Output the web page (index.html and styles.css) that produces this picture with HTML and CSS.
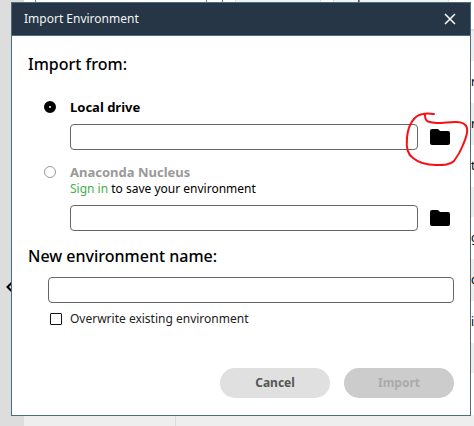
FILE: index.html
```html
<!DOCTYPE html>
<html lang="en">
<head>
<meta charset="utf-8">
<title>Import Environment</title>
<link rel="stylesheet" href="styles.css">
</head>
<body>
<div class="app" aria-hidden="true">
  <div class="app-side"><svg class="collapse" viewBox="0 0 6 10"><path d="M5.500 1 1.500 5l4 4"/></svg></div>
  <div class="app-main">
    <div class="toolbar"><span class="filter">Installed</span><span class="divider"></span><span class="chip">Channels</span><span class="chip wide">Update index...</span></div>
    <div class="columns"></div>
  </div>
  <div class="app-rows">
    <span class="head"></span><span>r</span><span class="alt">r</span><span>t</span><span class="alt short"></span><span>g</span><span class="alt">c</span><span>i</span><span class="alt short"></span><span></span><span class="alt"></span>
  </div>
</div>

<form class="dialog" role="dialog" aria-labelledby="dialog-title">
  <header class="titlebar">
    <h1 id="dialog-title">Import Environment</h1>
    <button class="close" type="button" aria-label="Close"><svg viewBox="0 0 12 12"><path d="M1 1l10 10M11 1 1 11"/></svg></button>
  </header>
  <div class="content">
    <h2>Import from:</h2>
    <div class="option">
      <input type="radio" id="local" name="source" checked>
      <label class="option-name" for="local">Local drive</label>
      <div class="picker">
        <input class="field" type="text" aria-label="Local drive path">
        <button class="folder" type="button" aria-label="Browse local drive">
          <svg class="folder-icon" viewBox="0 0 20 16"><path d="M2 0h5.500q.8 0 1.300.7L10 2h8q2 0 2 2v10q0 2-2 2H2q-2 0-2-2V2q0-2 2-2z"/></svg>
          <svg class="mark" viewBox="0 0 66 58"><path d="M30 4C27 4 24 3 19 4 10 5 4 15 3 28c-1 9 0 16 6 20 6 5 14 7 23 7 8 0 14 0 18-4 3-4 6-8 9-16 3-7 5-13 4-17-1-4-5-6-11-6-7 0-12 1-20 1-8-1-11-1-11-8"/></svg>
        </button>
      </div>
    </div>
    <div class="option">
      <input type="radio" id="nucleus" name="source">
      <label class="option-name muted" for="nucleus">Anaconda Nucleus</label>
      <p class="hint"><a href="#">Sign in</a> to save your environment</p>
      <div class="picker">
        <input class="field" type="text" aria-label="Anaconda Nucleus environment">
        <button class="folder" type="button" aria-label="Browse Anaconda Nucleus">
          <svg class="folder-icon" viewBox="0 0 20 16"><path d="M2 0h5.500q.8 0 1.300.7L10 2h8q2 0 2 2v10q0 2-2 2H2q-2 0-2-2V2q0-2 2-2z"/></svg>
        </button>
      </div>
    </div>
    <h2><label for="env-name">New environment name:</label></h2>
    <div class="name-group">
      <input class="field" type="text" id="env-name">
      <div class="check"><input type="checkbox" id="overwrite"><label for="overwrite">Overwrite existing environment</label></div>
    </div>
    <div class="actions">
      <button class="pill" type="button">Cancel</button>
      <button class="pill" type="submit" disabled>Import</button>
    </div>
  </div>
</form>
</body>
</html>
```
FILE: styles.css
```css
* { box-sizing: border-box; }

body {
  margin: 0;
  background: #fff;
  color: #000;
  font-family: "Noto Sans", "Open Sans", sans-serif;
  font-size: 12px;
  line-height: 16px;
}

h1, h2, p { margin: 0; }

button, input { font: inherit; margin: 0; }

button { border: 0; padding: 0; background: none; }

/* Application window behind the dialog */
.app {
  position: absolute;
  inset: 0;
  display: flex;
  overflow: hidden;
}

.app-side {
  flex: 0 0 24px;
  padding-left: 6px;
  display: flex;
  align-items: center;
  background: #ddd;
}

.collapse {
  width: 6px;
  height: 10px;
  margin-top: 148px;
  fill: none;
  stroke: #000;
  stroke-width: 2;
}

.app-main {
  flex: 1;
  display: flex;
  flex-direction: column;
}

.toolbar {
  display: flex;
  height: 28px;
  margin-top: -16px;
  padding-left: 11px;
}

.filter {
  flex: 0 0 172px;
  padding: 2px 0 0 24px;
  border: 1px solid #888;
}

.divider {
  flex: 0 0 1px;
  margin-left: 15px;
  background: #777;
}

.chip {
  flex: 0 0 86px;
  margin-left: 12px;
  padding-top: 2px;
  background: #f1f4f5;
  border: 1px solid #ddd;
  text-align: center;
}

.chip.wide { flex-basis: 116px; }

.columns {
  flex: 1;
  background: linear-gradient(90deg, #eee 151px, #ddd 151px 152px, #eee 152px);
}

.app-rows {
  flex: 0 0 3px;
  padding-top: 29px;
  overflow: hidden;
}

.app-rows span {
  display: block;
  height: 42px;
  line-height: 42px;
}

.app-rows .head {
  height: 32px;
  background: #eee;
  border-top: 2px solid #ddd;
}

.app-rows .alt { background: #eee; }

.app-rows .short { height: 30px; }

/* Dialog */
.dialog {
  position: relative;
  margin: 2px 3px 0 11px;
  border: 1px solid #49707f;
  background: #fff;
}

.titlebar {
  display: flex;
  align-items: center;
  justify-content: space-between;
  height: 33px;
  padding: 0 14px 0 12px;
  background: #263646;
  border-bottom: 1px solid #49707f;
  color: #f2f4f5;
}

h1 {
  font-size: 12px;
  font-weight: 400;
}

.close {
  width: 12px;
  height: 12px;
}

.close svg {
  display: block;
  fill: none;
  stroke: #fff;
  stroke-width: 1.500;
}

.content { padding: 16px 16px 17px; }

h2 {
  font-size: 16px;
  font-weight: 500;
  line-height: 24px;
}

.option {
  display: grid;
  grid-template-columns: 12px 1fr;
  column-gap: 14px;
  margin: 13px 4px 13px 16px;
}

h2 + .option { margin-top: 22px; }

.option > :not(input):not(.option-name) { grid-column: 2; }

input[type="radio"] {
  appearance: none;
  width: 12px;
  height: 12px;
  align-self: center;
  border: 1px solid #999;
  border-radius: 50%;
}

input[type="radio"]:checked { border: 5px solid #000; }

.option-name {
  font-size: 13px;
  font-weight: 700;
  line-height: 18px;
}

.muted { color: #999; }

.hint a {
  color: #43b049;
  text-decoration: none;
}

.picker {
  display: flex;
  align-items: center;
  gap: 12px;
  margin-top: 8px;
}

.field {
  flex: 1;
  width: 100%;
  min-width: 0;
  height: 26px;
  padding: 0 8px;
  border: 1px solid #666;
  border-radius: 4px;
  background: #fff;
}

.folder {
  position: relative;
  flex: 0 0 20px;
  height: 16px;
}

.folder-icon {
  display: block;
  width: 20px;
  height: 16px;
}

/* Pen circle drawn over the browse button */
.mark {
  position: absolute;
  top: -19px;
  left: -26px;
  width: 66px;
  height: 58px;
  fill: none;
  stroke: #f80f14;
  stroke-width: 2;
  stroke-linecap: round;
  pointer-events: none;
}

.name-group {
  display: grid;
  gap: 8px;
  margin: 9px 0 0 20px;
}

.check {
  display: flex;
  align-items: center;
  gap: 8px;
  padding-left: 2px;
  color: #222;
}

input[type="checkbox"] {
  appearance: none;
  width: 12px;
  height: 12px;
  border: 1px solid #111;
  border-radius: 1px;
}

.actions {
  display: flex;
  justify-content: flex-end;
  gap: 14px;
  margin-top: 41px;
}

.pill {
  width: 110px;
  height: 30px;
  border-radius: 15px;
  background: #e0e0e0;
  color: #555;
  font-weight: 700;
}

.pill:disabled {
  background: #ccc;
  color: #aaa;
}
```
